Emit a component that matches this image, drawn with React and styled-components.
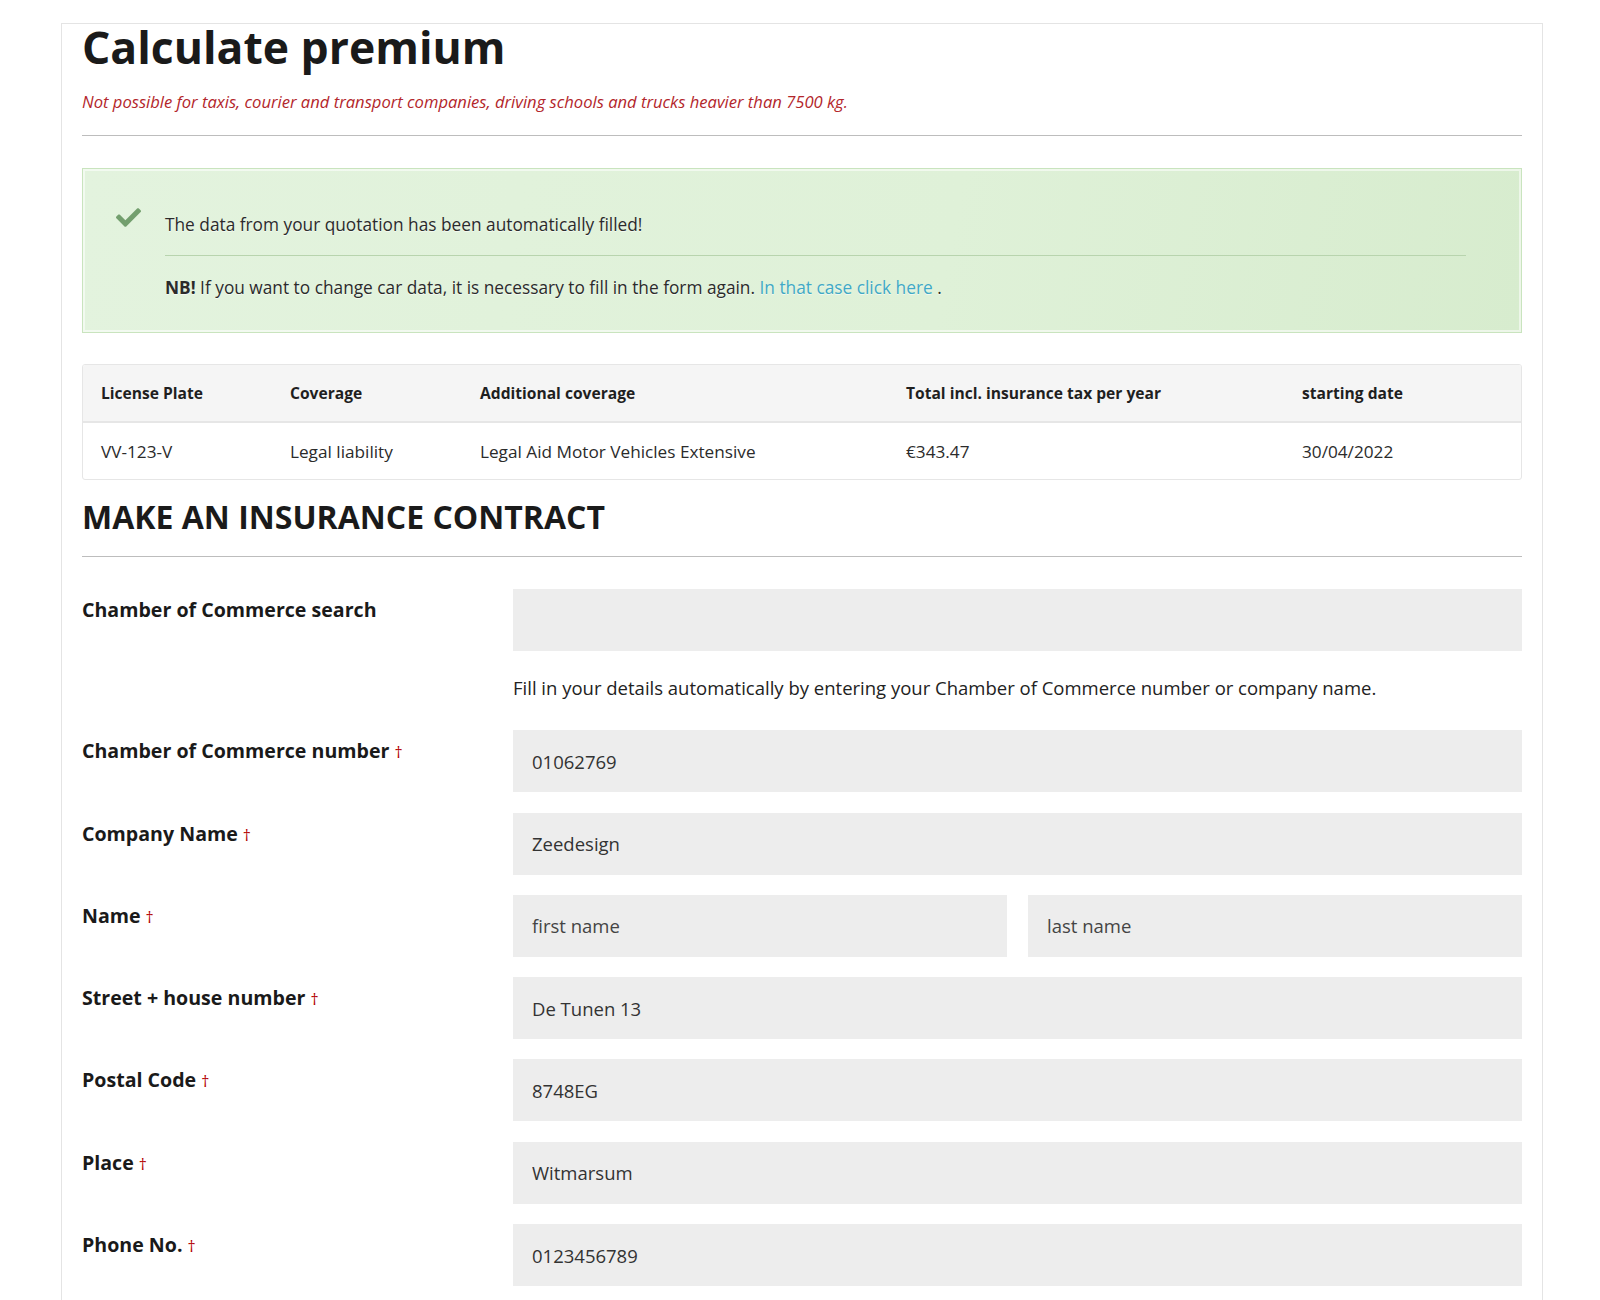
import React from 'react';
import styled, { createGlobalStyle } from 'styled-components';
import { FaCheck } from 'react-icons/fa';

const GlobalStyle = createGlobalStyle`
  body {
    margin: 0;
    background: #fff;
    font-family: "Open Sans", "Liberation Sans", sans-serif;
    color: #222;
  }
  * { box-sizing: border-box; }
`;

const Page = styled.div`
  margin: 23px 0 0 61px;
  width: 1482px;
  min-height: 1300px;
  border: 1px solid #e4e4e4;
  border-bottom: none;
  padding: 0 20px 40px;
`;

const Title = styled.h1`
  margin: 0;
  font-size: 44.5px;
  line-height: 45px;
  font-weight: 700;
  color: #1a1a1a;
`;

const Warning = styled.p`
  margin: 21px 0 0;
  font-size: 16.6px;
  line-height: 24px;
  font-style: italic;
  color: #b3262b;
`;

const Rule = styled.hr`
  margin: ${(p) => p.$top}px 0 0;
  border: none;
  border-top: 1px solid #bdbdbd;
  height: 0;
`;

const Notice = styled.div`
  margin-top: 32px;
  display: flex;
  gap: 22px;
  padding: 43px 55px 32px 33px;
  border: 1px solid #c9e4be;
  box-shadow: inset 0 0 0 2px rgba(255, 255, 255, 0.55);
  background: linear-gradient(100deg, #e3f3de 0%, #dff1d8 60%, #d7ecce 100%);
  text-shadow: 0 1px 0 rgba(255, 255, 255, 0.6);
`;

const CheckIcon = styled.div`
  flex: none;
  width: 27px;
  margin-top: -7px;
  color: #739f6e;
  font-size: 25px;
  line-height: 0;
`;

const NoticeBody = styled.div`
  flex: 1;
  font-size: 17.3px;
  line-height: 25px;
  color: #2b2b2b;
`;

const NoticeLine = styled.p`
  margin: 0;
`;

const NoticeDivider = styled.div`
  margin: 18px 0 19px;
  border-top: 1px solid #b8d4ae;
`;

const Link = styled.a`
  color: #3fa9c6;
  text-decoration: none;
`;

const Table = styled.table`
  margin-top: 31px;
  width: 100%;
  table-layout: fixed;
  border-collapse: separate;
  border-spacing: 0;
  border: 1px solid #e6e6e6;
  border-radius: 3px;
  overflow: hidden;
`;

const Th = styled.th`
  height: 58px;
  padding: 0 18px;
  text-align: left;
  font-size: 15.6px;
  font-weight: 700;
  color: #1f1f1f;
  background: #f5f5f5;
  border-bottom: 2px solid #e6e6e6;
`;

const Td = styled.td`
  height: 56px;
  padding: 0 18px;
  font-size: 17.2px;
  color: #2b2b2b;
`;

const SectionTitle = styled.h2`
  margin: 20px 0 0;
  font-size: 32px;
  line-height: 34px;
  font-weight: 700;
  color: #1a1a1a;
  text-transform: uppercase;
`;

const Form = styled.div`
  margin-top: 32px;
  display: grid;
  grid-template-columns: 431px 1fr;
  row-gap: 20.3px;
`;

const Label = styled.label`
  padding-top: 7px;
  font-size: 19.6px;
  line-height: 28px;
  font-weight: 700;
  color: #1a1a1a;
`;

const Required = styled.span`
  margin-left: 5px;
  font-size: 16px;
  font-weight: 400;
  color: #b30000;
`;

const Field = styled.div`
  display: flex;
  flex-direction: column;
`;

const Inputs = styled.div`
  display: flex;
  gap: 21px;
`;

const Input = styled.input`
  flex: 1;
  min-width: 0;
  height: 62px;
  padding: 0 19px;
  border: none;
  outline: none;
  background: #ededed;
  font-family: "Open Sans", "Liberation Sans", sans-serif;
  font-size: 18.5px;
  color: #333;

  &::placeholder {
    color: #444;
    opacity: 1;
  }
`;

const Help = styled.p`
  margin: 23px 0 8px;
  font-size: 18.5px;
  line-height: 28px;
  color: #222;
`;

const columns = [
  ['License Plate', 'VV-123-V', 189],
  ['Coverage', 'Legal liability', 190],
  ['Additional coverage', 'Legal Aid Motor Vehicles Extensive', 426],
  ['Total incl. insurance tax per year', '€343.47', 396],
  ['starting date', '30/04/2022', 237],
];

const fields = [
  ['Chamber of Commerce number', ['01062769']],
  ['Company Name', ['Zeedesign']],
  ['Name', ['', ''], ['first name', 'last name']],
  ['Street + house number', ['De Tunen 13']],
  ['Postal Code', ['8748EG']],
  ['Place', ['Witmarsum']],
  ['Phone No.', ['0123456789']],
];

export default function App() {
  return (
    <>
      <GlobalStyle />
      <Page>
        <Title>Calculate premium</Title>
        <Warning>
          Not possible for taxis, courier and transport companies, driving schools and trucks heavier than 7500 kg.
        </Warning>
        <Rule $top={21} />

        <Notice>
          <CheckIcon>
            <FaCheck />
          </CheckIcon>
          <NoticeBody>
            <NoticeLine>The data from your quotation has been automatically filled!</NoticeLine>
            <NoticeDivider />
            <NoticeLine>
              <b>NB!</b> If you want to change car data, it is necessary to fill in the form again.{' '}
              <Link href="#">In that case click here</Link> .
            </NoticeLine>
          </NoticeBody>
        </Notice>

        <Table>
          <colgroup>
            {columns.map(([head, , w]) => (
              <col key={head} style={{ width: w }} />
            ))}
          </colgroup>
          <thead>
            <tr>
              {columns.map(([head]) => (
                <Th key={head}>{head}</Th>
              ))}
            </tr>
          </thead>
          <tbody>
            <tr>
              {columns.map(([head, value]) => (
                <Td key={head}>{value}</Td>
              ))}
            </tr>
          </tbody>
        </Table>

        <SectionTitle>Make an insurance contract</SectionTitle>
        <Rule $top={22} />

        <Form>
          <Label>Chamber of Commerce search</Label>
          <Field>
            <Inputs>
              <Input type="text" />
            </Inputs>
            <Help>
              Fill in your details automatically by entering your Chamber of Commerce number or company name.
            </Help>
          </Field>

          {fields.map(([label, values, placeholders]) => (
            <React.Fragment key={label}>
              <Label>
                {label}
                <Required>†</Required>
              </Label>
              <Inputs>
                {values.map((v, i) => (
                  <Input
                    key={i}
                    type="text"
                    defaultValue={v}
                    placeholder={placeholders ? placeholders[i] : undefined}
                  />
                ))}
              </Inputs>
            </React.Fragment>
          ))}
        </Form>
      </Page>
    </>
  );
}
